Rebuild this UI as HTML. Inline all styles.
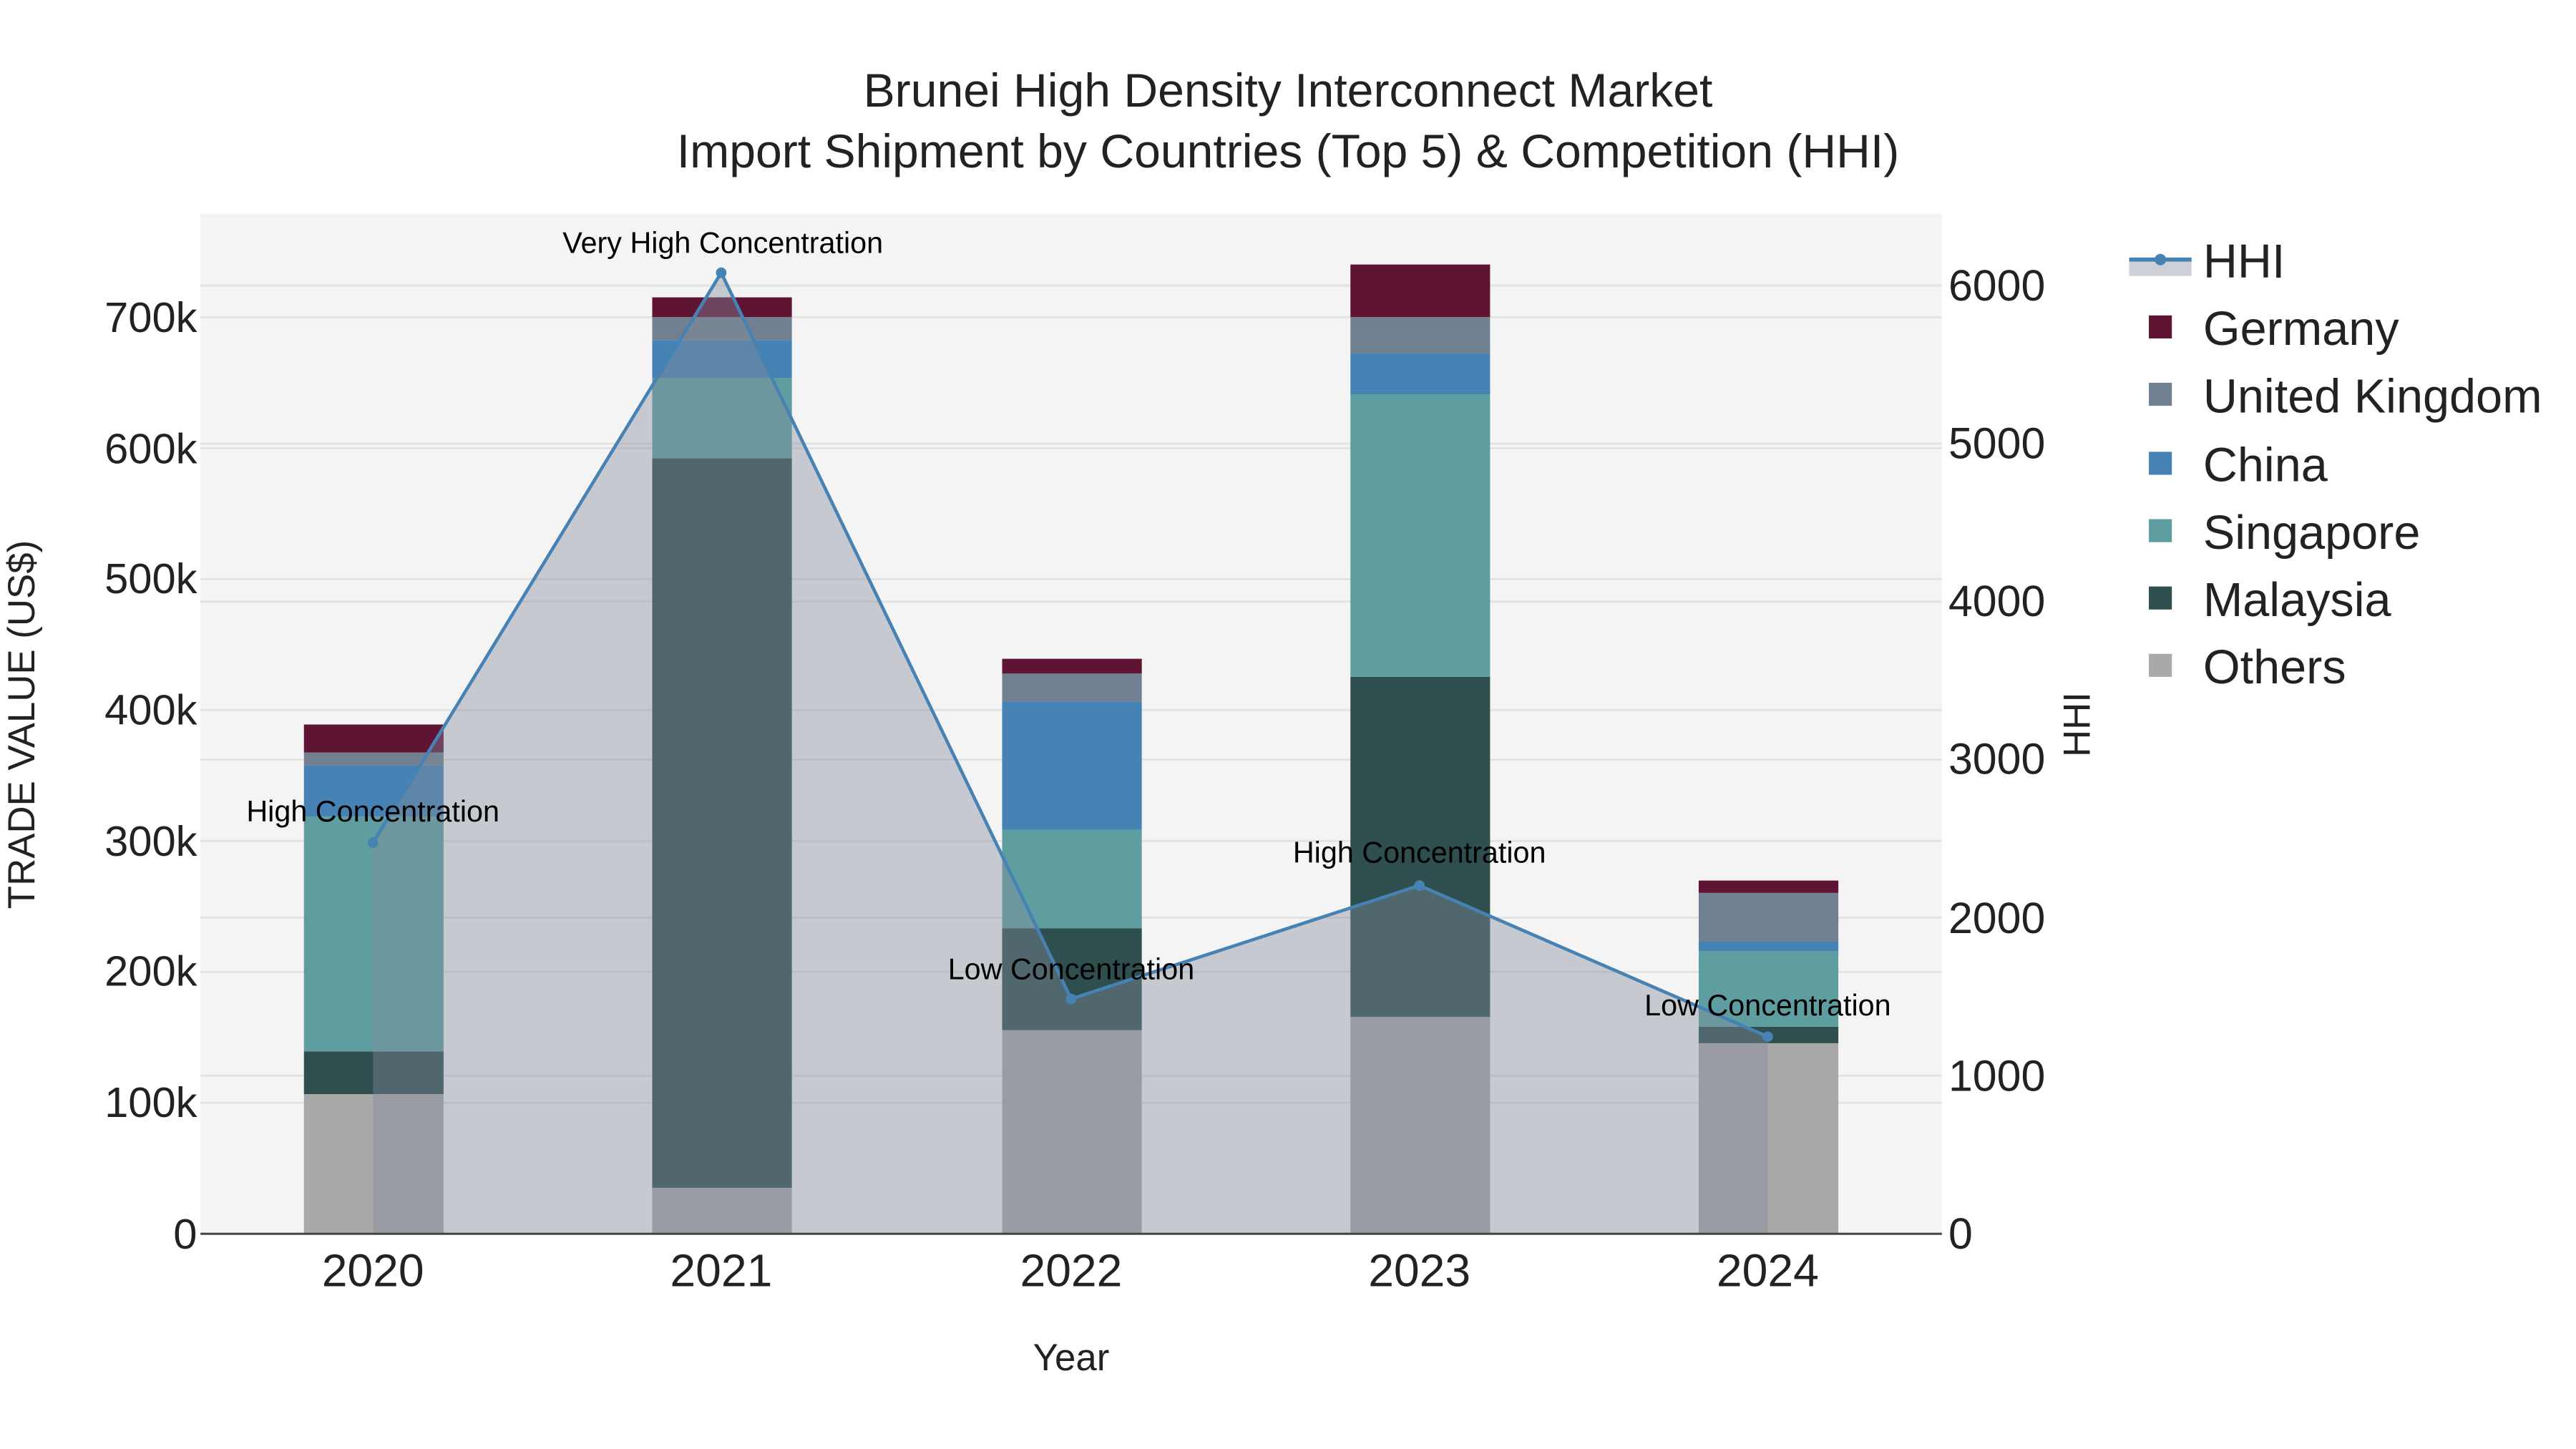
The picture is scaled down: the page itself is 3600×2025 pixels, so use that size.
<!DOCTYPE html>
<html><head><meta charset="utf-8"><style>html,body{margin:0;padding:0;background:#fff}svg{display:block}</style></head>
<body>
<svg width="3600" height="2025" viewBox="0 0 1568 882" xmlns="http://www.w3.org/2000/svg" font-family="Liberation Sans, sans-serif">
<rect x="122" y="130" width="1060" height="621" fill="#f4f4f4"/>
<g stroke="#e2e2e2" stroke-width="1.2">
<line x1="122" x2="1182" y1="671.3" y2="671.3"/><line x1="122" x2="1182" y1="591.6" y2="591.6"/><line x1="122" x2="1182" y1="511.9" y2="511.9"/><line x1="122" x2="1182" y1="432.2" y2="432.2"/><line x1="122" x2="1182" y1="352.5" y2="352.5"/><line x1="122" x2="1182" y1="272.8" y2="272.8"/><line x1="122" x2="1182" y1="193.1" y2="193.1"/>
<line x1="122" x2="1182" y1="654.8" y2="654.8"/><line x1="122" x2="1182" y1="558.6" y2="558.6"/><line x1="122" x2="1182" y1="462.4" y2="462.4"/><line x1="122" x2="1182" y1="366.2" y2="366.2"/><line x1="122" x2="1182" y1="270" y2="270"/><line x1="122" x2="1182" y1="173.8" y2="173.8"/>
</g>
<g>
<rect x="185" y="666" width="85" height="85" fill="#a9a9a9"/>
<rect x="185" y="640" width="85" height="26" fill="#2f4f4f"/>
<rect x="185" y="497" width="85" height="143" fill="#5f9ea0"/>
<rect x="185" y="466" width="85" height="31" fill="#4682b4"/>
<rect x="185" y="458" width="85" height="8" fill="#708090"/>
<rect x="185" y="441" width="85" height="17" fill="#601434"/>
<rect x="397" y="723" width="85" height="28" fill="#a9a9a9"/>
<rect x="397" y="279" width="85" height="444" fill="#2f4f4f"/>
<rect x="397" y="230" width="85" height="49" fill="#5f9ea0"/>
<rect x="397" y="207" width="85" height="23" fill="#4682b4"/>
<rect x="397" y="193" width="85" height="14" fill="#708090"/>
<rect x="397" y="181" width="85" height="12" fill="#601434"/>
<rect x="610" y="627" width="85" height="124" fill="#a9a9a9"/>
<rect x="610" y="565" width="85" height="62" fill="#2f4f4f"/>
<rect x="610" y="505" width="85" height="60" fill="#5f9ea0"/>
<rect x="610" y="427" width="85" height="78" fill="#4682b4"/>
<rect x="610" y="410" width="85" height="17" fill="#708090"/>
<rect x="610" y="401" width="85" height="9" fill="#601434"/>
<rect x="822" y="619" width="85" height="132" fill="#a9a9a9"/>
<rect x="822" y="412" width="85" height="207" fill="#2f4f4f"/>
<rect x="822" y="240" width="85" height="172" fill="#5f9ea0"/>
<rect x="822" y="215" width="85" height="25" fill="#4682b4"/>
<rect x="822" y="193" width="85" height="22" fill="#708090"/>
<rect x="822" y="161" width="85" height="32" fill="#601434"/>
<rect x="1034" y="635" width="85" height="116" fill="#a9a9a9"/>
<rect x="1034" y="625" width="85" height="10" fill="#2f4f4f"/>
<rect x="1034" y="579" width="85" height="46" fill="#5f9ea0"/>
<rect x="1034" y="573" width="85" height="6" fill="#4682b4"/>
<rect x="1034" y="543.5" width="85" height="29.5" fill="#708090"/>
<rect x="1034" y="536" width="85" height="7.5" fill="#601434"/>
</g>
<polygon points="227,513 439,166 652,608 864,539 1076,631 1076,751 227,751" fill="rgba(130,140,155,0.4)"/>
<polyline points="227,513 439,166 652,608 864,539 1076,631" fill="none" stroke="#4682b4" stroke-width="2"/>
<g fill="#4682b4"><circle cx="227" cy="513" r="3.2"/><circle cx="439" cy="166" r="3.2"/><circle cx="652" cy="608" r="3.2"/><circle cx="864" cy="539" r="3.2"/><circle cx="1076" cy="631" r="3.2"/></g>
<line x1="122" x2="1182" y1="751" y2="751" stroke="#444" stroke-width="1.3"/>
<g font-size="18" fill="#000" text-anchor="middle">
<text x="227" y="500">High Concentration</text>
<text x="440" y="154">Very High Concentration</text>
<text x="652" y="596">Low Concentration</text>
<text x="864" y="525">High Concentration</text>
<text x="1076" y="618">Low Concentration</text>
</g>
<g font-size="26" fill="#222" text-anchor="end">
<text x="120" y="760">0</text><text x="120" y="680">100k</text><text x="120" y="600">200k</text><text x="120" y="521">300k</text><text x="120" y="441">400k</text><text x="120" y="361">500k</text><text x="120" y="282">600k</text><text x="120" y="202">700k</text>
</g>
<g font-size="26.5" fill="#222">
<text x="1186" y="760">0</text><text x="1186" y="664">1000</text><text x="1186" y="568">2000</text><text x="1186" y="471">3000</text><text x="1186" y="375">4000</text><text x="1186" y="279">5000</text><text x="1186" y="183">6000</text>
</g>
<g font-size="28" fill="#222" text-anchor="middle">
<text x="227" y="783">2020</text><text x="439" y="783">2021</text><text x="652" y="783">2022</text><text x="864" y="783">2023</text><text x="1076" y="783">2024</text>
</g>
<text x="652" y="834" font-size="23" fill="#222" text-anchor="middle">Year</text>
<text transform="translate(21,441) rotate(-90)" font-size="23" fill="#222" text-anchor="middle">TRADE VALUE (US$)</text>
<text transform="translate(1272,441) rotate(-90)" font-size="23" fill="#222" text-anchor="middle">HHI</text>
<g font-size="28.8" fill="#222" text-anchor="middle">
<text x="784" y="65">Brunei High Density Interconnect Market</text>
<text x="784" y="102">Import Shipment by Countries (Top 5) &amp; Competition (HHI)</text>
</g>
<rect x="1296" y="158" width="38" height="10" fill="rgba(130,140,155,0.4)"/>
<line x1="1296" x2="1334" y1="158" y2="158" stroke="#4682b4" stroke-width="2.5"/>
<circle cx="1315" cy="158" r="3.5" fill="#4682b4"/>
<rect x="1308" y="192" width="14" height="14" fill="#601434"/>
<rect x="1308" y="233" width="14" height="14" fill="#708090"/>
<rect x="1308" y="275" width="14" height="14" fill="#4682b4"/>
<rect x="1308" y="316" width="14" height="14" fill="#5f9ea0"/>
<rect x="1308" y="357" width="14" height="14" fill="#2f4f4f"/>
<rect x="1308" y="398" width="14" height="14" fill="#a9a9a9"/>
<g font-size="29" fill="#222">
<text x="1341" y="169">HHI</text>
<text x="1341" y="210">Germany</text>
<text x="1341" y="251">United Kingdom</text>
<text x="1341" y="293">China</text>
<text x="1341" y="334">Singapore</text>
<text x="1341" y="375">Malaysia</text>
<text x="1341" y="416">Others</text>
</g>
</svg>
</body></html>
